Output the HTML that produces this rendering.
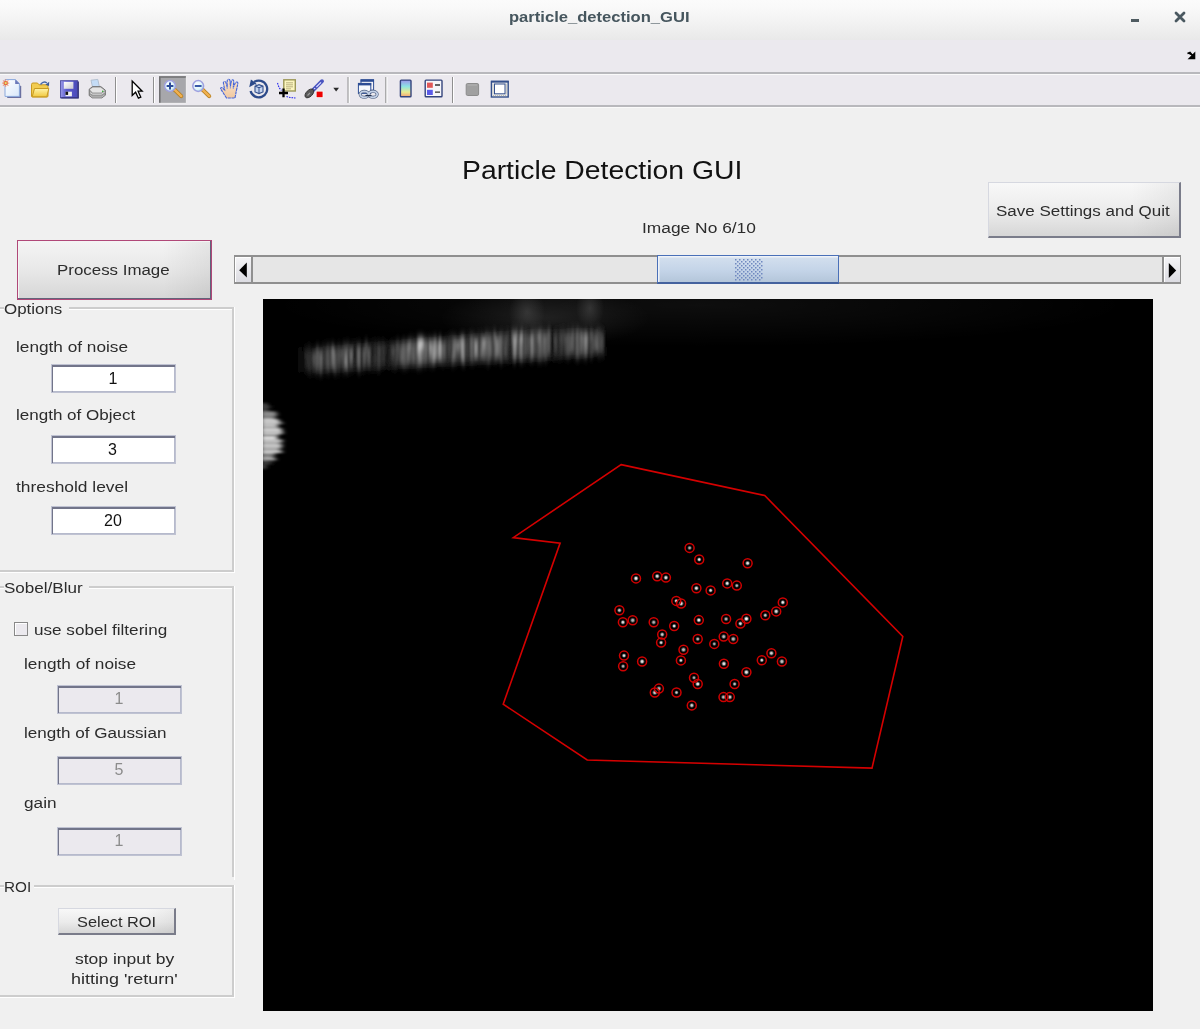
<!DOCTYPE html>
<html><head><meta charset="utf-8">
<style>
html,body{margin:0;padding:0}
body{width:1200px;height:1029px;position:relative;overflow:hidden;background:#f0f0f0;font-family:"Liberation Sans",sans-serif;color:#222}
.a{position:absolute}
.t{position:absolute;white-space:pre;line-height:1;transform-origin:0 0;filter:grayscale(1)}
.sep{position:absolute;width:1px;background:#8c8c8c;border-right:1px solid #fff}
.edit{position:absolute;background:#fff;box-sizing:border-box;border:1px solid #bfc2d2;box-shadow:inset 1px 2px 0 #72758a,inset -1px -1px 0 #b6bacc}
.edit.dis{background:#ebe9ee}
.pline{position:absolute;background:#c8c8c8}
.btn{position:absolute;box-sizing:border-box;background:linear-gradient(to right,rgba(0,0,0,0) 75%,rgba(0,0,0,0.05)),linear-gradient(#f8f8f8 0%,#ebebeb 55%,#d6d6d6 100%);border-top:1px solid #d6d8e0;border-left:1px solid #d6d8e0;border-right:2px solid #7a7c8a;border-bottom:2px solid #7a7c8a}
</style></head>
<body>
<!-- title bar -->
<div class="a" style="left:0;top:0;width:1200px;height:40px;background:linear-gradient(#fbfbfb,#f9f9f9 20%,#f1f1f1 62%,#e9e9e9)"></div>
<div class="t" style="left:509px;top:9px;font-size:15px;font-weight:bold;color:#46565e;transform:scaleX(1.105);filter:none">particle_detection_GUI</div>
<div class="a" style="left:1131px;top:19px;width:8px;height:3px;background:#4f5b61"></div>
<svg class="a" style="left:1174px;top:11px" width="12" height="12" viewBox="0 0 12 12"><path d="M2 2L10 10M10 2L2 10" stroke="#4a5860" stroke-width="2.8" stroke-linecap="round"/></svg>
<!-- menubar -->
<div class="a" style="left:0;top:40px;width:1200px;height:32px;background:#ebe9ee"></div>
<svg class="a" style="left:1186px;top:51px" width="10" height="9" viewBox="0 0 10 9"><path d="M1.5 2.5L4 1.5L7 5M8.5 2.5L8.5 7.5L3.5 7.5Z" stroke="#000" stroke-width="1.6" fill="#000"/></svg>
<div class="a" style="left:0;top:72px;width:1200px;height:2px;background:#b8b8bc"></div>
<div class="a" style="left:0;top:74px;width:1200px;height:1px;background:#fafafa"></div>
<!-- toolbar -->
<div class="a" style="left:0;top:75px;width:1200px;height:30px;background:#ebe9ee"></div>
<div class="a" style="left:0;top:105px;width:1200px;height:2px;background:#b8b8bc"></div>
<div class="a" style="left:0;top:107px;width:1200px;height:1px;background:#fafafa"></div>
<svg class="a" style="left:0;top:0" width="520" height="110" viewBox="0 0 520 110">
<defs>
<linearGradient id="pg" x1="0" y1="0" x2="1" y2="1"><stop offset="0" stop-color="#ffffff"/><stop offset="1" stop-color="#d8e8fa"/></linearGradient>
<linearGradient id="fy" x1="0" y1="0" x2="0" y2="1"><stop offset="0" stop-color="#fff4a8"/><stop offset="1" stop-color="#f0c840"/></linearGradient>
<linearGradient id="fl" x1="0" y1="0" x2="1" y2="0"><stop offset="0" stop-color="#9a9ae8"/><stop offset="0.35" stop-color="#5c5cd0"/><stop offset="1" stop-color="#4a4ab8"/></linearGradient>
<linearGradient id="lb" x1="0" y1="0" x2="1" y2="1"><stop offset="0" stop-color="#ffffff"/><stop offset="1" stop-color="#c8c8d0"/></linearGradient>
<radialGradient id="lens" cx="0.4" cy="0.4" r="0.6"><stop offset="0" stop-color="#ffffff"/><stop offset="0.7" stop-color="#e0f6fa"/><stop offset="1" stop-color="#b0e0ee"/></radialGradient>
<linearGradient id="cb" x1="0" y1="0" x2="0" y2="1"><stop offset="0" stop-color="#9c94ec"/><stop offset="0.38" stop-color="#8ce4e4"/><stop offset="0.72" stop-color="#e8ec90"/><stop offset="1" stop-color="#f4a474"/></linearGradient>
<linearGradient id="skin" x1="0" y1="0" x2="0" y2="1"><stop offset="0" stop-color="#fbe4cc"/><stop offset="1" stop-color="#f0c8a0"/></linearGradient>
</defs>
<!-- new -->
<path d="M6 81.5H16.5L20 85V96.5H6Z" fill="#6a70a0" transform="translate(1.2,1.6)"/>
<path d="M5 79.6H15.5L19.4 83.5V96.4H5Z" fill="url(#pg)" stroke="#8aa8dc" stroke-width="1"/>
<path d="M15.2 79.6L19.6 84H15.2Z" fill="#6a78b8"/>
<g stroke="#f09070" stroke-width="1.1" opacity="0.8"><path d="M3 80.4L8.4 85.8M8.4 80.4L3 85.8M5.7 79.3V86.9M2.1 83.1H9.3"/></g>
<circle cx="5.7" cy="83.1" r="2.2" fill="#e86a3a"/><circle cx="5.7" cy="83.1" r="1.1" fill="#e0e870"/>
<!-- open -->
<path d="M31.5 84.5Q31.5 83 33 83H37.5L39 84.8H46.5Q48 84.8 48 86.3V96Q48 97 47 97H32.5Q31.5 97 31.5 96Z" fill="#f2cc50" stroke="#c89a20" stroke-width="1"/>
<path d="M34.5 88.5H48.8L46.8 96.8H32.2Z" fill="url(#fy)" stroke="#c89a20" stroke-width="1"/>
<path d="M40.5 84.5Q43.5 80.5 47 83" fill="none" stroke="#4a6aa8" stroke-width="1.3"/>
<path d="M45.5 84.8L49.2 81.8L49 86Z" fill="#3a5a98"/>
<!-- save -->
<rect x="60.5" y="80.7" width="17.2" height="17.2" fill="url(#fl)" stroke="#40409a" stroke-width="0.8"/>
<path d="M61.2 97.9H78.2V81.5" fill="none" stroke="#30307a" stroke-width="1.4"/>
<rect x="63.8" y="81.8" width="9.6" height="7" fill="url(#lb)"/>
<rect x="65.5" y="91.7" width="6.4" height="4.6" fill="#f0f0f0"/>
<rect x="65.5" y="91.7" width="2.6" height="3.2" fill="#111"/>
<!-- print -->
<path d="M91 80.2L97.8 79.4L99.6 87.5H92.6Z" fill="#c4dcf6" stroke="#a8b8c8" stroke-width="0.8"/>
<path d="M89.2 89.2L92.6 86.6H100.8L105.4 90.2V95.2L101.8 97.9H92.4L89.2 95.6Z" fill="#9a9a9a" stroke="#6e6e6e" stroke-width="0.9"/>
<path d="M89.8 89.4L92.8 87.4H100.6L104.6 90.4L101.4 92.4H92.6Z" fill="#e4e4e4"/>
<path d="M90 92.6L92.6 94.2H101.4L104.8 92" fill="none" stroke="#d8d8d8" stroke-width="1"/>
<path d="M90.2 95.4L92.6 97H101.6L104.6 95" fill="none" stroke="#c8c8c8" stroke-width="0.8"/>
<rect x="102" y="90.6" width="1.4" height="1.4" fill="#40b040"/>
<!-- separators -->
<g fill="#8f8f8f"><rect x="115" y="77" width="1" height="26"/><rect x="153" y="77" width="1" height="26"/><rect x="347.5" y="77" width="1.2" height="26"/><rect x="385.3" y="77" width="1.2" height="26"/><rect x="452" y="77" width="1" height="26"/></g>
<g fill="#ffffff"><rect x="116" y="77" width="1" height="26"/><rect x="154" y="77" width="1" height="26"/><rect x="348.7" y="77" width="1" height="26"/><rect x="386.5" y="77" width="1" height="26"/><rect x="453" y="77" width="1" height="26"/></g>
<!-- arrow -->
<path d="M132.2 81V95.5L135.6 92.2L138.4 98.2L140.8 97.2L138.1 91.2H142.2Z" fill="#fff" stroke="#000" stroke-width="1.3" stroke-linejoin="miter"/>
<!-- zoom-in pressed -->
<rect x="159" y="76.2" width="27" height="26.8" fill="#a7a7ab"/>
<path d="M159.8 103V77H186" fill="none" stroke="#707072" stroke-width="1.6"/>
<path d="M186.3 76.5V103.3H159" fill="none" stroke="#f0f0f0" stroke-width="0.8"/>
<path d="M174.8 89.8L181.2 96.2" stroke="#b07818" stroke-width="4" stroke-linecap="round"/>
<path d="M174.8 89.8L181.2 96.2" stroke="#f0b050" stroke-width="2.6" stroke-linecap="round"/>
<circle cx="170" cy="86" r="5.4" fill="url(#lens)" stroke="#a0a0e0" stroke-width="1.5"/>
<path d="M166.6 86H173.4M170 82.6V89.4" stroke="#2a4a98" stroke-width="2"/>
<!-- zoom-out -->
<path d="M202.8 89.8L209.2 96.2" stroke="#b07818" stroke-width="4" stroke-linecap="round"/>
<path d="M202.8 89.8L209.2 96.2" stroke="#f0b050" stroke-width="2.6" stroke-linecap="round"/>
<circle cx="198.2" cy="86" r="5.4" fill="url(#lens)" stroke="#a0a0e0" stroke-width="1.5"/>
<path d="M194.8 86H201.6" stroke="#3a5aa8" stroke-width="2"/>
<!-- hand -->
<path d="M226.5 98L223 92.5L220.8 89.2Q220 87.6 221.8 87.6L224.6 89.8L223.4 83Q223.2 81.5 224.6 81.5Q225.7 81.6 226.1 83L227.2 87L227.2 80.8Q227.4 79.4 228.7 79.4Q229.9 79.4 230 80.8L230.4 86.5L231.4 80.8Q231.7 79.7 232.9 79.9Q233.8 80.1 233.7 81.3L233.3 87.3L235.5 82.6Q236.2 81.7 237.2 82.1Q238.1 82.6 237.8 83.8L236.3 91L235 98Z" fill="url(#skin)" stroke="#4666d8" stroke-width="1.15" stroke-dasharray="3 0.6"/>
<path d="M227.2 87V89M230.4 86.5V88.5M233.3 87.3V89" stroke="#6a88e0" stroke-width="0.8"/>
<!-- rotate -->
<path d="M250.6 91A8.4 8.4 0 1 0 254.2 81.9" fill="none" stroke="#2c4a8a" stroke-width="2.3"/>
<path d="M249.2 87.2L250.9 79.6L256.4 83.4Z" fill="#2c4a8a"/>
<path d="M255 86.2L259 84.7L263 86.2V92L259 93.6L255 92Z" fill="#c4d4f0" stroke="#34508e" stroke-width="1.1"/>
<path d="M255 86.2L259 87.7L263 86.2M259 87.7V93.6" fill="none" stroke="#34508e" stroke-width="1"/>
<path d="M255.5 83.3L256.6 86.2" stroke="#34508e" stroke-width="0.9"/>
<!-- data cursor -->
<rect x="283.8" y="79.8" width="11.5" height="11.2" fill="#fcf6c0" stroke="#9c9858" stroke-width="1.4"/>
<path d="M286 82.8H293M286 84.8H293M286 86.8H293M286 88.8H291" stroke="#a8a070" stroke-width="0.8"/>
<path d="M277.5 83L279 87.5L281.5 90.5M286.5 96.5L290 97.5L295.5 98" fill="none" stroke="#2a2aee" stroke-width="1.1" stroke-dasharray="1.6 1"/>
<path d="M279 93H288M283.5 88.6V97.2" stroke="#000" stroke-width="2.3"/>
<!-- brush -->
<path d="M322 81.2L313.6 89.6" stroke="#4a54c0" stroke-width="3.9" stroke-linecap="round"/>
<path d="M321 82.4L316.4 87" stroke="#dfe2ff" stroke-width="1.1"/>
<path d="M315.2 88L314 89.3" stroke="#ffffff" stroke-width="1"/>
<ellipse cx="309.4" cy="93.4" rx="5.4" ry="3.1" transform="rotate(-45 309.4 93.4)" fill="#5a5a5a" stroke="#2e2e2e" stroke-width="0.9"/>
<path d="M307.5 95.5L310 93" stroke="#a0a0a0" stroke-width="1.1"/>
<rect x="315.8" y="90.8" width="7.6" height="7.2" fill="#f4fcfc"/>
<rect x="316.6" y="91.6" width="6" height="5.6" fill="#ee0000"/>
<!-- dropdown -->
<path d="M333.3 87.8H339L336.15 91.6Z" fill="#2a2a2a"/>
<!-- link -->
<rect x="361" y="79.8" width="12.6" height="10.4" fill="#f4f4f8" stroke="#2c4c94" stroke-width="1"/>
<rect x="360.6" y="79.4" width="13.4" height="2.4" fill="#2c4c94"/>
<rect x="358.4" y="83.4" width="12.4" height="10" fill="#f6f8fc" stroke="#2c4c94" stroke-width="1"/>
<rect x="358" y="83" width="13.2" height="2.4" fill="#2c4c94"/>
<ellipse cx="364.3" cy="94.3" rx="4.2" ry="3" fill="none" stroke="#506080" stroke-width="3"/>
<ellipse cx="373" cy="94.3" rx="4.2" ry="3" fill="none" stroke="#506080" stroke-width="3"/>
<ellipse cx="364.3" cy="94.3" rx="4.2" ry="3" fill="none" stroke="#c4d2e8" stroke-width="1.8"/>
<ellipse cx="373" cy="94.3" rx="4.2" ry="3" fill="none" stroke="#c4d2e8" stroke-width="1.8"/>
<path d="M365.5 95.6H371.5" stroke="#1e2a48" stroke-width="1.3"/>
<!-- colorbar -->
<rect x="400.4" y="80.1" width="10.6" height="16.6" fill="url(#cb)" stroke="#34447c" stroke-width="1.4" rx="0.8"/>
<!-- legend -->
<rect x="425.2" y="80.1" width="16.8" height="16.6" fill="#f6f6fa" stroke="#34447c" stroke-width="1.4" rx="0.8"/>
<rect x="427" y="82.6" width="5.8" height="5.2" fill="#e05858"/>
<rect x="427" y="89.8" width="5.8" height="5.2" fill="#5a5ae8"/>
<path d="M435 85H440M435 92.2H440" stroke="#333" stroke-width="1.3"/>
<!-- grey square -->
<rect x="466.2" y="83.5" width="12.4" height="12" fill="#a0a0a0" stroke="#8c8c8c" stroke-width="1" rx="1.4"/><path d="M467.5 85H477" stroke="#b4b4b4" stroke-width="1"/>
<!-- plot tools -->
<rect x="491.4" y="81.4" width="16.8" height="15.6" fill="#e8e8e8" stroke="#34508c" stroke-width="1.4"/>
<rect x="491" y="80.8" width="17.6" height="1.8" fill="#34508c"/>
<rect x="494.5" y="84" width="10.5" height="9.8" fill="#ffffff" stroke="#34508c" stroke-width="1"/>
<path d="M493 84.5V94M506.5 84.5V94M493 95.6H506.5" stroke="#b8b8a8" stroke-width="1" stroke-dasharray="1 1"/>
</svg>


<!-- heading -->

<!-- save button -->
<div class="btn" style="left:988px;top:182px;width:193px;height:56px"></div>

<!-- process button -->
<div class="a" style="left:17px;top:240px;width:195px;height:60px;box-sizing:border-box;border:1px solid #b04878;box-shadow:inset -1px -1px 0 #62647a,inset 1px 1px 0 #f4f4f4;background:linear-gradient(to right,rgba(0,0,0,0) 75%,rgba(0,0,0,0.06)),linear-gradient(#f4f4f4,#e8e8e8 50%,#d6d6d6)"></div>

<!-- scrollbar -->
<div class="a" style="left:234px;top:255px;width:947px;height:29px;background:#e6e6e6;box-sizing:border-box;border-top:2px solid #8f8f8f;border-bottom:2px solid #8f8f8f"></div>
<div class="a" style="left:234px;top:255px;width:19px;height:29px;box-sizing:border-box;border:1px solid #909090;border-top-width:2px;border-bottom-width:2px;border-right-width:2px;background:linear-gradient(#f4f4f6,#dcdce2);box-shadow:inset 1px 1px 0 #fff"></div>
<svg class="a" style="left:234px;top:255px" width="19" height="29"><path d="M5.2 15.2L12.8 7.5L12.8 22.5Z" fill="#000"/></svg>
<div class="a" style="left:1162px;top:255px;width:19px;height:29px;box-sizing:border-box;border:1px solid #909090;border-top-width:2px;border-bottom-width:2px;border-left-width:2px;background:linear-gradient(#f4f4f6,#dcdce2);box-shadow:inset 1px 1px 0 #fff"></div>
<svg class="a" style="left:1162px;top:255px" width="19" height="29"><path d="M14.2 15.5L6.8 8L6.8 23Z" fill="#000"/></svg>
<div class="a" style="left:657px;top:255px;width:182px;height:29px;box-sizing:border-box;border:1.5px solid #4a70b8;border-bottom:2px solid #44629e;box-shadow:inset 1.5px 1.5px 0 #eef2f8;background:linear-gradient(#d4e0ee,#c4d4e8 55%,#b4c6da)"></div>
<svg class="a" style="left:735px;top:259px" width="28" height="22"><defs><pattern id="gp" width="4" height="4" patternUnits="userSpaceOnUse"><rect x="0" y="0" width="1.5" height="1.5" fill="#6f88c0"/><rect x="2" y="2" width="1.5" height="1.5" fill="#6f88c0"/></pattern></defs><rect width="28" height="22" fill="url(#gp)"/></svg>


<!-- options panel -->
<div class="a" style="left:0;top:307px;width:4px;height:2px;background:#cdcdcd"></div>
<div class="a" style="left:0;top:309px;width:4px;height:1px;background:#fff"></div>
<div class="a" style="left:69px;top:307px;width:165px;height:2px;background:#cdcdcd"></div>
<div class="a" style="left:69px;top:309px;width:163px;height:1px;background:#fff"></div>
<div class="a" style="left:232px;top:309px;width:2px;height:261px;background:#cdcdcd"></div>
<div class="a" style="left:234px;top:307px;width:1px;height:266px;background:#fff"></div>
<div class="a" style="left:0;top:570px;width:234px;height:2px;background:#cdcdcd"></div>
<div class="a" style="left:0;top:572px;width:235px;height:1px;background:#fff"></div>
<div class="a" style="left:0;top:586px;width:4px;height:2px;background:#cdcdcd"></div>
<div class="a" style="left:0;top:588px;width:4px;height:1px;background:#fff"></div>
<div class="a" style="left:89px;top:586px;width:145px;height:2px;background:#cdcdcd"></div>
<div class="a" style="left:89px;top:588px;width:143px;height:1px;background:#fff"></div>
<div class="a" style="left:232px;top:588px;width:2px;height:289px;background:#cdcdcd"></div>
<div class="a" style="left:234px;top:586px;width:1px;height:294px;background:#fff"></div>
<div class="a" style="left:0;top:885px;width:4px;height:2px;background:#cdcdcd"></div>
<div class="a" style="left:0;top:887px;width:4px;height:1px;background:#fff"></div>
<div class="a" style="left:34px;top:885px;width:200px;height:2px;background:#cdcdcd"></div>
<div class="a" style="left:34px;top:887px;width:198px;height:1px;background:#fff"></div>
<div class="a" style="left:232px;top:887px;width:2px;height:108px;background:#cdcdcd"></div>
<div class="a" style="left:234px;top:885px;width:1px;height:113px;background:#fff"></div>
<div class="a" style="left:0;top:995px;width:234px;height:2px;background:#cdcdcd"></div>
<div class="a" style="left:0;top:997px;width:235px;height:1px;background:#fff"></div>
<div class="edit" style="left:51px;top:364px;width:125px;height:29px"></div>
<div class="edit" style="left:51px;top:435px;width:125px;height:29px"></div>
<div class="edit" style="left:51px;top:506px;width:125px;height:29px"></div>
<div class="edit dis" style="left:57px;top:685px;width:125px;height:29px"></div>
<div class="edit dis" style="left:57px;top:756px;width:125px;height:29px"></div>
<div class="edit dis" style="left:57px;top:827px;width:125px;height:29px"></div>
<div class="a" style="left:14px;top:622px;width:14px;height:14px;box-sizing:border-box;border:1px solid #888;box-shadow:inset 1px 1px 0 #fff;background:#ebe9ee"></div>
<div class="btn" style="left:58px;top:908px;width:118px;height:27px"></div>

<!-- image -->
<svg class="a" style="left:263px;top:299px" width="890" height="712" viewBox="263 299 890 712">
<defs><filter id="bl1" filterUnits="userSpaceOnUse" x="263" y="299" width="890" height="712"><feGaussianBlur stdDeviation="1.1 4.2"/></filter><filter id="bl2" filterUnits="userSpaceOnUse" x="263" y="299" width="890" height="712"><feGaussianBlur stdDeviation="5"/></filter><filter id="bl3" filterUnits="userSpaceOnUse" x="263" y="299" width="890" height="712"><feGaussianBlur stdDeviation="2.5 0.9"/></filter><radialGradient id="dot"><stop offset="0" stop-color="#fff"/><stop offset="0.35" stop-color="#e8e8e8"/><stop offset="1" stop-color="#808080" stop-opacity="0"/></radialGradient></defs>
<rect x="263" y="299" width="890" height="712" fill="#000"/>
<defs><radialGradient id="hz"><stop offset="0" stop-color="#fff" stop-opacity="1"/><stop offset="1" stop-color="#fff" stop-opacity="0"/></radialGradient></defs>
<ellipse cx="700" cy="305" rx="430" ry="42" fill="url(#hz)" opacity="0.055"/>
<ellipse cx="545" cy="318" rx="105" ry="30" fill="url(#hz)" opacity="0.10"/>
<ellipse cx="527" cy="312" rx="18" ry="24" fill="url(#hz)" opacity="0.12"/>
<ellipse cx="590" cy="308" rx="14" ry="22" fill="url(#hz)" opacity="0.13"/>
<g filter="url(#bl2)"><polygon points="312,352 400,344 520,334 598,332 598,353 520,359 400,365 312,370" fill="#1c1c1c"/></g>
<g filter="url(#bl1)">
<rect x="298.0" y="347.3" width="1.5" height="9.0" fill="rgb(13,13,13)"/>
<rect x="298.0" y="356.3" width="1.5" height="17.6" fill="rgb(14,14,14)"/>
<rect x="299.5" y="347.3" width="1" height="10.4" fill="rgb(13,13,13)"/>
<rect x="299.5" y="357.7" width="1" height="11.7" fill="rgb(8,8,8)"/>
<rect x="300.5" y="347.2" width="1" height="8.1" fill="rgb(23,23,23)"/>
<rect x="300.5" y="355.2" width="1" height="17.1" fill="rgb(25,25,25)"/>
<rect x="301.5" y="347.4" width="1" height="14.5" fill="rgb(8,8,8)"/>
<rect x="301.5" y="362.0" width="1" height="8.7" fill="rgb(9,9,9)"/>
<rect x="302.5" y="350.9" width="2.5" height="11.6" fill="rgb(12,12,12)"/>
<rect x="302.5" y="362.5" width="2.5" height="9.6" fill="rgb(11,11,11)"/>
<rect x="305.0" y="348.6" width="1.5" height="8.0" fill="rgb(59,59,59)"/>
<rect x="305.0" y="356.6" width="1.5" height="13.5" fill="rgb(34,34,34)"/>
<rect x="306.5" y="350.7" width="1.5" height="13.5" fill="rgb(49,49,49)"/>
<rect x="306.5" y="364.2" width="1.5" height="6.0" fill="rgb(52,52,52)"/>
<rect x="308.0" y="346.4" width="1.5" height="15.7" fill="rgb(51,51,51)"/>
<rect x="308.0" y="362.1" width="1.5" height="10.2" fill="rgb(54,54,54)"/>
<rect x="309.5" y="349.0" width="1.5" height="7.9" fill="rgb(52,52,52)"/>
<rect x="309.5" y="356.9" width="1.5" height="16.2" fill="rgb(51,51,51)"/>
<rect x="311.0" y="350.1" width="2.5" height="15.3" fill="rgb(45,45,45)"/>
<rect x="311.0" y="365.4" width="2.5" height="6.6" fill="rgb(30,30,30)"/>
<rect x="313.5" y="351.4" width="2" height="10.2" fill="rgb(113,113,113)"/>
<rect x="313.5" y="361.6" width="2" height="8.6" fill="rgb(84,84,84)"/>
<rect x="315.5" y="347.9" width="1.5" height="8.4" fill="rgb(61,61,61)"/>
<rect x="315.5" y="356.3" width="1.5" height="16.9" fill="rgb(58,58,58)"/>
<rect x="317.0" y="347.1" width="1" height="10.3" fill="rgb(134,134,134)"/>
<rect x="317.0" y="357.4" width="1" height="12.9" fill="rgb(126,126,126)"/>
<rect x="318.0" y="349.3" width="1" height="11.7" fill="rgb(20,20,20)"/>
<rect x="318.0" y="361.0" width="1" height="6.8" fill="rgb(18,18,18)"/>
<rect x="319.0" y="348.6" width="1" height="14.3" fill="rgb(85,85,85)"/>
<rect x="319.0" y="362.9" width="1" height="10.5" fill="rgb(81,81,81)"/>
<rect x="320.0" y="350.4" width="2.5" height="13.1" fill="rgb(112,112,112)"/>
<rect x="320.0" y="363.5" width="2.5" height="9.8" fill="rgb(91,91,91)"/>
<rect x="322.5" y="345.3" width="2" height="8.7" fill="rgb(53,53,53)"/>
<rect x="322.5" y="354.0" width="2" height="13.9" fill="rgb(52,52,52)"/>
<rect x="324.5" y="348.0" width="1" height="13.7" fill="rgb(50,50,50)"/>
<rect x="324.5" y="361.7" width="1" height="11.4" fill="rgb(48,48,48)"/>
<rect x="325.5" y="346.8" width="2" height="7.9" fill="rgb(82,82,82)"/>
<rect x="325.5" y="354.7" width="2" height="14.8" fill="rgb(80,80,80)"/>
<rect x="327.5" y="345.4" width="2" height="15.7" fill="rgb(94,94,94)"/>
<rect x="327.5" y="361.1" width="2" height="10.6" fill="rgb(95,95,95)"/>
<rect x="329.5" y="347.5" width="2" height="10.5" fill="rgb(46,46,46)"/>
<rect x="329.5" y="358.1" width="2" height="9.8" fill="rgb(56,56,56)"/>
<rect x="331.5" y="345.8" width="2.5" height="8.6" fill="rgb(142,142,142)"/>
<rect x="331.5" y="354.3" width="2.5" height="14.8" fill="rgb(114,114,114)"/>
<rect x="334.0" y="348.9" width="2" height="15.3" fill="rgb(97,97,97)"/>
<rect x="334.0" y="364.1" width="2" height="8.5" fill="rgb(89,89,89)"/>
<rect x="336.0" y="346.8" width="2.5" height="16.9" fill="rgb(54,54,54)"/>
<rect x="336.0" y="363.7" width="2.5" height="7.4" fill="rgb(41,41,41)"/>
<rect x="338.5" y="346.3" width="1" height="17.9" fill="rgb(136,136,136)"/>
<rect x="338.5" y="364.3" width="1" height="7.9" fill="rgb(90,90,90)"/>
<rect x="339.5" y="345.6" width="1" height="16.5" fill="rgb(69,69,69)"/>
<rect x="339.5" y="362.1" width="1" height="7.3" fill="rgb(41,41,41)"/>
<rect x="340.5" y="348.5" width="2.5" height="8.5" fill="rgb(92,92,92)"/>
<rect x="340.5" y="356.9" width="2.5" height="10.1" fill="rgb(61,61,61)"/>
<rect x="343.0" y="343.8" width="1" height="16.6" fill="rgb(87,87,87)"/>
<rect x="343.0" y="360.3" width="1" height="11.6" fill="rgb(91,91,91)"/>
<rect x="344.0" y="343.9" width="1" height="15.3" fill="rgb(51,51,51)"/>
<rect x="344.0" y="359.2" width="1" height="7.8" fill="rgb(31,31,31)"/>
<rect x="345.0" y="345.2" width="2" height="8.5" fill="rgb(95,95,95)"/>
<rect x="345.0" y="353.7" width="2" height="15.7" fill="rgb(146,146,146)"/>
<rect x="347.0" y="343.8" width="2.5" height="10.6" fill="rgb(76,76,76)"/>
<rect x="347.0" y="354.4" width="2.5" height="17.5" fill="rgb(41,41,41)"/>
<rect x="349.5" y="346.2" width="1" height="9.9" fill="rgb(62,62,62)"/>
<rect x="349.5" y="356.1" width="1" height="11.3" fill="rgb(86,86,86)"/>
<rect x="350.5" y="347.5" width="1.5" height="13.5" fill="rgb(145,145,145)"/>
<rect x="350.5" y="361.0" width="1.5" height="7.9" fill="rgb(84,84,84)"/>
<rect x="352.0" y="345.1" width="1" height="6.5" fill="rgb(43,43,43)"/>
<rect x="352.0" y="351.7" width="1" height="15.1" fill="rgb(27,27,27)"/>
<rect x="353.0" y="342.8" width="2" height="13.8" fill="rgb(40,40,40)"/>
<rect x="353.0" y="356.6" width="2" height="13.1" fill="rgb(42,42,42)"/>
<rect x="355.0" y="342.5" width="2" height="11.3" fill="rgb(18,18,18)"/>
<rect x="355.0" y="353.8" width="2" height="12.2" fill="rgb(27,27,27)"/>
<rect x="357.0" y="345.1" width="1" height="13.5" fill="rgb(87,87,87)"/>
<rect x="357.0" y="358.6" width="1" height="9.9" fill="rgb(81,81,81)"/>
<rect x="358.0" y="345.1" width="2" height="17.1" fill="rgb(115,115,115)"/>
<rect x="358.0" y="362.2" width="2" height="8.4" fill="rgb(104,104,104)"/>
<rect x="360.0" y="342.6" width="1" height="8.3" fill="rgb(41,41,41)"/>
<rect x="360.0" y="350.9" width="1" height="16.9" fill="rgb(32,32,32)"/>
<rect x="361.0" y="346.4" width="2.5" height="13.6" fill="rgb(29,29,29)"/>
<rect x="361.0" y="360.0" width="2.5" height="10.8" fill="rgb(24,24,24)"/>
<rect x="363.5" y="347.3" width="1" height="9.9" fill="rgb(163,163,163)"/>
<rect x="363.5" y="357.2" width="1" height="10.1" fill="rgb(139,139,139)"/>
<rect x="364.5" y="343.9" width="1" height="10.4" fill="rgb(87,87,87)"/>
<rect x="364.5" y="354.3" width="1" height="13.1" fill="rgb(91,91,91)"/>
<rect x="365.5" y="341.5" width="1.5" height="13.9" fill="rgb(99,99,99)"/>
<rect x="365.5" y="355.4" width="1.5" height="11.4" fill="rgb(65,65,65)"/>
<rect x="367.0" y="342.8" width="1" height="13.5" fill="rgb(42,42,42)"/>
<rect x="367.0" y="356.4" width="1" height="8.6" fill="rgb(33,33,33)"/>
<rect x="368.0" y="346.8" width="2" height="10.4" fill="rgb(103,103,103)"/>
<rect x="368.0" y="357.3" width="2" height="9.8" fill="rgb(91,91,91)"/>
<rect x="370.0" y="345.1" width="1.5" height="7.2" fill="rgb(23,23,23)"/>
<rect x="370.0" y="352.4" width="1.5" height="14.7" fill="rgb(18,18,18)"/>
<rect x="371.5" y="341.3" width="1.5" height="13.7" fill="rgb(39,39,39)"/>
<rect x="371.5" y="354.9" width="1.5" height="14.7" fill="rgb(39,39,39)"/>
<rect x="373.0" y="345.0" width="1.5" height="17.2" fill="rgb(22,22,22)"/>
<rect x="373.0" y="362.2" width="1.5" height="7.8" fill="rgb(18,18,18)"/>
<rect x="374.5" y="341.9" width="1.5" height="14.3" fill="rgb(57,57,57)"/>
<rect x="374.5" y="356.1" width="1.5" height="10.8" fill="rgb(68,68,68)"/>
<rect x="376.0" y="343.5" width="1.5" height="13.4" fill="rgb(12,12,12)"/>
<rect x="376.0" y="356.9" width="1.5" height="13.1" fill="rgb(12,12,12)"/>
<rect x="377.5" y="343.3" width="2.5" height="11.8" fill="rgb(72,72,72)"/>
<rect x="377.5" y="355.1" width="2.5" height="14.0" fill="rgb(71,71,71)"/>
<rect x="380.0" y="344.4" width="1" height="10.8" fill="rgb(46,46,46)"/>
<rect x="380.0" y="355.2" width="1" height="12.6" fill="rgb(33,33,33)"/>
<rect x="381.0" y="345.4" width="1" height="6.8" fill="rgb(38,38,38)"/>
<rect x="381.0" y="352.2" width="1" height="14.3" fill="rgb(29,29,29)"/>
<rect x="382.0" y="341.5" width="2" height="11.7" fill="rgb(52,52,52)"/>
<rect x="382.0" y="353.1" width="2" height="12.4" fill="rgb(55,55,55)"/>
<rect x="384.0" y="345.7" width="1.5" height="6.2" fill="rgb(59,59,59)"/>
<rect x="384.0" y="352.0" width="1.5" height="13.6" fill="rgb(37,37,37)"/>
<rect x="385.5" y="342.6" width="1" height="9.2" fill="rgb(33,33,33)"/>
<rect x="385.5" y="351.7" width="1" height="14.9" fill="rgb(21,21,21)"/>
<rect x="386.5" y="343.1" width="1.5" height="9.6" fill="rgb(29,29,29)"/>
<rect x="386.5" y="352.7" width="1.5" height="13.2" fill="rgb(18,18,18)"/>
<rect x="388.0" y="344.9" width="2" height="12.5" fill="rgb(31,31,31)"/>
<rect x="388.0" y="357.4" width="2" height="10.7" fill="rgb(27,27,27)"/>
<rect x="390.0" y="343.2" width="2" height="12.9" fill="rgb(46,46,46)"/>
<rect x="390.0" y="356.1" width="2" height="7.5" fill="rgb(37,37,37)"/>
<rect x="392.0" y="344.6" width="2.5" height="12.2" fill="rgb(81,81,81)"/>
<rect x="392.0" y="356.8" width="2.5" height="10.9" fill="rgb(44,44,44)"/>
<rect x="394.5" y="343.1" width="2.5" height="9.5" fill="rgb(60,60,60)"/>
<rect x="394.5" y="352.5" width="2.5" height="14.7" fill="rgb(55,55,55)"/>
<rect x="397.0" y="341.5" width="1.5" height="6.7" fill="rgb(119,119,119)"/>
<rect x="397.0" y="348.1" width="1.5" height="15.0" fill="rgb(89,89,89)"/>
<rect x="398.5" y="343.1" width="1.5" height="11.7" fill="rgb(63,63,63)"/>
<rect x="398.5" y="354.8" width="1.5" height="11.0" fill="rgb(38,38,38)"/>
<rect x="400.0" y="343.6" width="2.5" height="12.4" fill="rgb(89,89,89)"/>
<rect x="400.0" y="355.9" width="2.5" height="8.2" fill="rgb(101,101,101)"/>
<rect x="402.5" y="341.2" width="2" height="15.4" fill="rgb(120,120,120)"/>
<rect x="402.5" y="356.6" width="2" height="10.0" fill="rgb(110,110,110)"/>
<rect x="404.5" y="342.1" width="1" height="13.4" fill="rgb(101,101,101)"/>
<rect x="404.5" y="355.5" width="1" height="11.0" fill="rgb(111,111,111)"/>
<rect x="405.5" y="342.3" width="2" height="10.0" fill="rgb(99,99,99)"/>
<rect x="405.5" y="352.3" width="2" height="14.0" fill="rgb(86,86,86)"/>
<rect x="407.5" y="341.3" width="2" height="7.6" fill="rgb(147,147,147)"/>
<rect x="407.5" y="348.9" width="2" height="15.1" fill="rgb(116,116,116)"/>
<rect x="409.5" y="340.6" width="1" height="8.8" fill="rgb(194,194,194)"/>
<rect x="409.5" y="349.5" width="1" height="14.2" fill="rgb(117,117,117)"/>
<rect x="410.5" y="339.4" width="2" height="13.3" fill="rgb(94,94,94)"/>
<rect x="410.5" y="352.8" width="2" height="11.3" fill="rgb(68,68,68)"/>
<rect x="412.5" y="343.1" width="1" height="6.7" fill="rgb(112,112,112)"/>
<rect x="412.5" y="349.8" width="1" height="14.9" fill="rgb(136,136,136)"/>
<rect x="413.5" y="340.2" width="2" height="8.3" fill="rgb(113,113,113)"/>
<rect x="413.5" y="348.5" width="2" height="15.5" fill="rgb(100,100,100)"/>
<rect x="415.5" y="343.1" width="1.5" height="15.0" fill="rgb(62,62,62)"/>
<rect x="415.5" y="358.1" width="1.5" height="7.7" fill="rgb(57,57,57)"/>
<rect x="417.0" y="337.9" width="2" height="17.5" fill="rgb(153,153,153)"/>
<rect x="417.0" y="355.4" width="2" height="11.6" fill="rgb(100,100,100)"/>
<rect x="419.0" y="343.0" width="1" height="8.1" fill="rgb(183,183,183)"/>
<rect x="419.0" y="351.0" width="1" height="11.8" fill="rgb(133,133,133)"/>
<rect x="420.0" y="337.5" width="1.5" height="13.0" fill="rgb(211,211,211)"/>
<rect x="420.0" y="350.5" width="1.5" height="15.3" fill="rgb(163,163,163)"/>
<rect x="421.5" y="341.6" width="1" height="13.3" fill="rgb(72,72,72)"/>
<rect x="421.5" y="355.0" width="1" height="8.9" fill="rgb(52,52,52)"/>
<rect x="422.5" y="338.2" width="1" height="10.5" fill="rgb(164,164,164)"/>
<rect x="422.5" y="348.6" width="1" height="14.9" fill="rgb(192,192,192)"/>
<rect x="423.5" y="338.9" width="2.5" height="11.6" fill="rgb(94,94,94)"/>
<rect x="423.5" y="350.5" width="2.5" height="13.8" fill="rgb(82,82,82)"/>
<rect x="426.0" y="340.2" width="1" height="10.1" fill="rgb(158,158,158)"/>
<rect x="426.0" y="350.3" width="1" height="13.2" fill="rgb(119,119,119)"/>
<rect x="427.0" y="338.9" width="2" height="8.8" fill="rgb(36,36,36)"/>
<rect x="427.0" y="347.8" width="2" height="13.5" fill="rgb(39,39,39)"/>
<rect x="429.0" y="339.2" width="1" height="11.0" fill="rgb(149,149,149)"/>
<rect x="429.0" y="350.3" width="1" height="13.4" fill="rgb(108,108,108)"/>
<rect x="430.0" y="340.8" width="1.5" height="14.1" fill="rgb(170,170,170)"/>
<rect x="430.0" y="354.9" width="1.5" height="8.8" fill="rgb(97,97,97)"/>
<rect x="431.5" y="339.2" width="1" height="14.4" fill="rgb(153,153,153)"/>
<rect x="431.5" y="353.6" width="1" height="8.6" fill="rgb(85,85,85)"/>
<rect x="432.5" y="339.4" width="2" height="7.3" fill="rgb(146,146,146)"/>
<rect x="432.5" y="346.7" width="2" height="17.1" fill="rgb(174,174,174)"/>
<rect x="434.5" y="337.9" width="2" height="8.3" fill="rgb(170,170,170)"/>
<rect x="434.5" y="346.2" width="2" height="14.6" fill="rgb(167,167,167)"/>
<rect x="436.5" y="341.7" width="2.5" height="11.5" fill="rgb(111,111,111)"/>
<rect x="436.5" y="353.2" width="2.5" height="7.3" fill="rgb(105,105,105)"/>
<rect x="439.0" y="338.0" width="2" height="9.1" fill="rgb(182,182,182)"/>
<rect x="439.0" y="347.0" width="2" height="13.5" fill="rgb(170,170,170)"/>
<rect x="441.0" y="341.7" width="1" height="7.7" fill="rgb(101,101,101)"/>
<rect x="441.0" y="349.4" width="1" height="11.4" fill="rgb(55,55,55)"/>
<rect x="442.0" y="341.7" width="2" height="14.2" fill="rgb(106,106,106)"/>
<rect x="442.0" y="355.9" width="2" height="7.5" fill="rgb(81,81,81)"/>
<rect x="444.0" y="339.8" width="1" height="7.6" fill="rgb(96,96,96)"/>
<rect x="444.0" y="347.3" width="1" height="12.5" fill="rgb(77,77,77)"/>
<rect x="445.0" y="341.4" width="1" height="6.1" fill="rgb(93,93,93)"/>
<rect x="445.0" y="347.4" width="1" height="13.3" fill="rgb(87,87,87)"/>
<rect x="446.0" y="337.5" width="2.5" height="8.8" fill="rgb(46,46,46)"/>
<rect x="446.0" y="346.3" width="2.5" height="18.1" fill="rgb(33,33,33)"/>
<rect x="448.5" y="340.2" width="1" height="14.1" fill="rgb(98,98,98)"/>
<rect x="448.5" y="354.3" width="1" height="6.6" fill="rgb(72,72,72)"/>
<rect x="449.5" y="335.9" width="1" height="17.9" fill="rgb(94,94,94)"/>
<rect x="449.5" y="353.7" width="1" height="8.9" fill="rgb(79,79,79)"/>
<rect x="450.5" y="335.8" width="2" height="16.8" fill="rgb(42,42,42)"/>
<rect x="450.5" y="352.6" width="2" height="8.7" fill="rgb(36,36,36)"/>
<rect x="452.5" y="336.4" width="1" height="16.8" fill="rgb(124,124,124)"/>
<rect x="452.5" y="353.2" width="1" height="11.3" fill="rgb(161,161,161)"/>
<rect x="453.5" y="337.8" width="2" height="7.2" fill="rgb(120,120,120)"/>
<rect x="453.5" y="345.0" width="2" height="14.5" fill="rgb(132,132,132)"/>
<rect x="455.5" y="337.3" width="1" height="11.1" fill="rgb(148,148,148)"/>
<rect x="455.5" y="348.3" width="1" height="15.1" fill="rgb(86,86,86)"/>
<rect x="456.5" y="340.4" width="2.5" height="8.7" fill="rgb(143,143,143)"/>
<rect x="456.5" y="349.1" width="2.5" height="10.8" fill="rgb(76,76,76)"/>
<rect x="459.0" y="337.1" width="2" height="11.5" fill="rgb(112,112,112)"/>
<rect x="459.0" y="348.6" width="2" height="12.2" fill="rgb(64,64,64)"/>
<rect x="461.0" y="336.5" width="1" height="16.2" fill="rgb(151,151,151)"/>
<rect x="461.0" y="352.7" width="1" height="7.5" fill="rgb(110,110,110)"/>
<rect x="462.0" y="336.2" width="2.5" height="14.3" fill="rgb(159,159,159)"/>
<rect x="462.0" y="350.5" width="2.5" height="12.3" fill="rgb(154,154,154)"/>
<rect x="464.5" y="337.0" width="1" height="18.5" fill="rgb(70,70,70)"/>
<rect x="464.5" y="355.5" width="1" height="8.6" fill="rgb(57,57,57)"/>
<rect x="465.5" y="337.0" width="2" height="14.4" fill="rgb(52,52,52)"/>
<rect x="465.5" y="351.4" width="2" height="7.0" fill="rgb(58,58,58)"/>
<rect x="467.5" y="335.8" width="1" height="15.1" fill="rgb(99,99,99)"/>
<rect x="467.5" y="350.9" width="1" height="9.5" fill="rgb(94,94,94)"/>
<rect x="468.5" y="334.0" width="1" height="11.8" fill="rgb(47,47,47)"/>
<rect x="468.5" y="345.8" width="1" height="15.7" fill="rgb(41,41,41)"/>
<rect x="469.5" y="334.3" width="1" height="15.7" fill="rgb(37,37,37)"/>
<rect x="469.5" y="350.0" width="1" height="11.2" fill="rgb(29,29,29)"/>
<rect x="470.5" y="335.0" width="2" height="16.1" fill="rgb(129,129,129)"/>
<rect x="470.5" y="351.1" width="2" height="10.3" fill="rgb(118,118,118)"/>
<rect x="472.5" y="335.6" width="1.5" height="10.2" fill="rgb(85,85,85)"/>
<rect x="472.5" y="345.8" width="1.5" height="16.6" fill="rgb(74,74,74)"/>
<rect x="474.0" y="334.4" width="1" height="9.6" fill="rgb(84,84,84)"/>
<rect x="474.0" y="344.0" width="1" height="14.4" fill="rgb(88,88,88)"/>
<rect x="475.0" y="339.1" width="2.5" height="9.5" fill="rgb(168,168,168)"/>
<rect x="475.0" y="348.6" width="2.5" height="9.9" fill="rgb(155,155,155)"/>
<rect x="477.5" y="333.7" width="1.5" height="17.4" fill="rgb(77,77,77)"/>
<rect x="477.5" y="351.1" width="1.5" height="7.9" fill="rgb(83,83,83)"/>
<rect x="479.0" y="336.4" width="1.5" height="14.7" fill="rgb(34,34,34)"/>
<rect x="479.0" y="351.1" width="1.5" height="11.3" fill="rgb(45,45,45)"/>
<rect x="480.5" y="334.9" width="2.5" height="9.0" fill="rgb(109,109,109)"/>
<rect x="480.5" y="343.9" width="2.5" height="14.6" fill="rgb(119,119,119)"/>
<rect x="483.0" y="337.3" width="2.5" height="10.2" fill="rgb(161,161,161)"/>
<rect x="483.0" y="347.5" width="2.5" height="12.5" fill="rgb(101,101,101)"/>
<rect x="485.5" y="332.6" width="1" height="11.7" fill="rgb(144,144,144)"/>
<rect x="485.5" y="344.3" width="1" height="13.8" fill="rgb(136,136,136)"/>
<rect x="486.5" y="333.7" width="1" height="16.8" fill="rgb(122,122,122)"/>
<rect x="486.5" y="350.5" width="1" height="12.8" fill="rgb(84,84,84)"/>
<rect x="487.5" y="334.5" width="2.5" height="19.6" fill="rgb(110,110,110)"/>
<rect x="487.5" y="354.1" width="2.5" height="8.5" fill="rgb(87,87,87)"/>
<rect x="490.0" y="334.4" width="2.5" height="8.2" fill="rgb(82,82,82)"/>
<rect x="490.0" y="342.6" width="2.5" height="15.6" fill="rgb(98,98,98)"/>
<rect x="492.5" y="331.6" width="1.5" height="16.0" fill="rgb(53,53,53)"/>
<rect x="492.5" y="347.7" width="1.5" height="12.8" fill="rgb(29,29,29)"/>
<rect x="494.0" y="332.4" width="2" height="9.8" fill="rgb(123,123,123)"/>
<rect x="494.0" y="342.2" width="2" height="17.0" fill="rgb(99,99,99)"/>
<rect x="496.0" y="337.0" width="2" height="7.4" fill="rgb(136,136,136)"/>
<rect x="496.0" y="344.5" width="2" height="13.8" fill="rgb(127,127,127)"/>
<rect x="498.0" y="334.9" width="2" height="13.2" fill="rgb(104,104,104)"/>
<rect x="498.0" y="348.1" width="2" height="9.4" fill="rgb(104,104,104)"/>
<rect x="500.0" y="333.3" width="2.5" height="18.1" fill="rgb(104,104,104)"/>
<rect x="500.0" y="351.4" width="2.5" height="10.6" fill="rgb(93,93,93)"/>
<rect x="502.5" y="332.8" width="2" height="17.1" fill="rgb(54,54,54)"/>
<rect x="502.5" y="349.9" width="2" height="7.8" fill="rgb(34,34,34)"/>
<rect x="504.5" y="334.4" width="2" height="11.0" fill="rgb(90,90,90)"/>
<rect x="504.5" y="345.5" width="2" height="13.1" fill="rgb(99,99,99)"/>
<rect x="506.5" y="331.7" width="1.5" height="12.1" fill="rgb(67,67,67)"/>
<rect x="506.5" y="343.9" width="1.5" height="15.0" fill="rgb(49,49,49)"/>
<rect x="508.0" y="331.5" width="1" height="18.1" fill="rgb(63,63,63)"/>
<rect x="508.0" y="349.6" width="1" height="11.5" fill="rgb(47,47,47)"/>
<rect x="509.0" y="332.2" width="2" height="16.4" fill="rgb(26,26,26)"/>
<rect x="509.0" y="348.6" width="2" height="10.0" fill="rgb(25,25,25)"/>
<rect x="511.0" y="334.2" width="1" height="13.5" fill="rgb(28,28,28)"/>
<rect x="511.0" y="347.8" width="1" height="13.3" fill="rgb(33,33,33)"/>
<rect x="512.0" y="329.9" width="2" height="14.6" fill="rgb(117,117,117)"/>
<rect x="512.0" y="344.5" width="2" height="12.2" fill="rgb(73,73,73)"/>
<rect x="514.0" y="335.3" width="1" height="9.7" fill="rgb(170,170,170)"/>
<rect x="514.0" y="345.0" width="1" height="16.8" fill="rgb(165,165,165)"/>
<rect x="515.0" y="331.0" width="1" height="14.8" fill="rgb(176,176,176)"/>
<rect x="515.0" y="345.8" width="1" height="12.4" fill="rgb(126,126,126)"/>
<rect x="516.0" y="330.6" width="1.5" height="13.6" fill="rgb(108,108,108)"/>
<rect x="516.0" y="344.3" width="1.5" height="13.5" fill="rgb(77,77,77)"/>
<rect x="517.5" y="330.9" width="1" height="12.2" fill="rgb(127,127,127)"/>
<rect x="517.5" y="343.1" width="1" height="14.9" fill="rgb(85,85,85)"/>
<rect x="518.5" y="334.9" width="2" height="12.1" fill="rgb(85,85,85)"/>
<rect x="518.5" y="347.1" width="2" height="11.7" fill="rgb(85,85,85)"/>
<rect x="520.5" y="331.4" width="1.5" height="11.9" fill="rgb(206,206,206)"/>
<rect x="520.5" y="343.3" width="1.5" height="17.5" fill="rgb(153,153,153)"/>
<rect x="522.0" y="330.3" width="1.5" height="20.0" fill="rgb(36,36,36)"/>
<rect x="522.0" y="350.3" width="1.5" height="9.3" fill="rgb(37,37,37)"/>
<rect x="523.5" y="332.4" width="1.5" height="11.6" fill="rgb(96,96,96)"/>
<rect x="523.5" y="344.0" width="1.5" height="15.7" fill="rgb(85,85,85)"/>
<rect x="525.0" y="331.4" width="1" height="8.4" fill="rgb(98,98,98)"/>
<rect x="525.0" y="339.8" width="1" height="18.0" fill="rgb(94,94,94)"/>
<rect x="526.0" y="331.0" width="1" height="11.2" fill="rgb(25,25,25)"/>
<rect x="526.0" y="342.2" width="1" height="14.1" fill="rgb(27,27,27)"/>
<rect x="527.0" y="333.8" width="2" height="6.9" fill="rgb(97,97,97)"/>
<rect x="527.0" y="340.7" width="2" height="15.8" fill="rgb(84,84,84)"/>
<rect x="529.0" y="334.0" width="2" height="12.0" fill="rgb(70,70,70)"/>
<rect x="529.0" y="346.0" width="2" height="14.1" fill="rgb(51,51,51)"/>
<rect x="531.0" y="332.3" width="2.5" height="14.3" fill="rgb(147,147,147)"/>
<rect x="531.0" y="346.6" width="2.5" height="12.1" fill="rgb(130,130,130)"/>
<rect x="533.5" y="331.9" width="1" height="10.2" fill="rgb(47,47,47)"/>
<rect x="533.5" y="342.0" width="1" height="15.5" fill="rgb(64,64,64)"/>
<rect x="534.5" y="329.8" width="1" height="14.1" fill="rgb(136,136,136)"/>
<rect x="534.5" y="343.9" width="1" height="13.7" fill="rgb(123,123,123)"/>
<rect x="535.5" y="330.5" width="2" height="8.4" fill="rgb(69,69,69)"/>
<rect x="535.5" y="338.9" width="2" height="17.9" fill="rgb(60,60,60)"/>
<rect x="537.5" y="331.2" width="2.5" height="9.7" fill="rgb(129,129,129)"/>
<rect x="537.5" y="340.9" width="2.5" height="19.5" fill="rgb(86,86,86)"/>
<rect x="540.0" y="329.3" width="1" height="20.6" fill="rgb(116,116,116)"/>
<rect x="540.0" y="349.9" width="1" height="10.2" fill="rgb(72,72,72)"/>
<rect x="541.0" y="331.1" width="1" height="14.4" fill="rgb(83,83,83)"/>
<rect x="541.0" y="345.5" width="1" height="13.9" fill="rgb(91,91,91)"/>
<rect x="542.0" y="329.5" width="1" height="19.4" fill="rgb(66,66,66)"/>
<rect x="542.0" y="348.9" width="1" height="11.1" fill="rgb(56,56,56)"/>
<rect x="543.0" y="332.1" width="1.5" height="15.8" fill="rgb(107,107,107)"/>
<rect x="543.0" y="347.9" width="1.5" height="8.9" fill="rgb(100,100,100)"/>
<rect x="544.5" y="332.6" width="2" height="12.8" fill="rgb(120,120,120)"/>
<rect x="544.5" y="345.4" width="2" height="14.2" fill="rgb(100,100,100)"/>
<rect x="546.5" y="331.9" width="1.5" height="9.5" fill="rgb(85,85,85)"/>
<rect x="546.5" y="341.4" width="1.5" height="16.3" fill="rgb(78,78,78)"/>
<rect x="548.0" y="329.2" width="2" height="8.0" fill="rgb(109,109,109)"/>
<rect x="548.0" y="337.2" width="2" height="17.2" fill="rgb(95,95,95)"/>
<rect x="550.0" y="333.4" width="2.5" height="9.6" fill="rgb(21,21,21)"/>
<rect x="550.0" y="343.0" width="2.5" height="15.6" fill="rgb(15,15,15)"/>
<rect x="552.5" y="333.7" width="2.5" height="8.9" fill="rgb(38,38,38)"/>
<rect x="552.5" y="342.6" width="2.5" height="17.0" fill="rgb(31,31,31)"/>
<rect x="555.0" y="332.7" width="1" height="13.0" fill="rgb(101,101,101)"/>
<rect x="555.0" y="345.7" width="1" height="8.6" fill="rgb(83,83,83)"/>
<rect x="556.0" y="329.4" width="1" height="12.3" fill="rgb(36,36,36)"/>
<rect x="556.0" y="341.7" width="1" height="13.9" fill="rgb(37,37,37)"/>
<rect x="557.0" y="333.6" width="1.5" height="13.3" fill="rgb(46,46,46)"/>
<rect x="557.0" y="346.9" width="1.5" height="11.3" fill="rgb(37,37,37)"/>
<rect x="558.5" y="330.7" width="2.5" height="12.0" fill="rgb(52,52,52)"/>
<rect x="558.5" y="342.8" width="2.5" height="15.4" fill="rgb(43,43,43)"/>
<rect x="561.0" y="331.5" width="1" height="11.2" fill="rgb(91,91,91)"/>
<rect x="561.0" y="342.7" width="1" height="12.4" fill="rgb(70,70,70)"/>
<rect x="562.0" y="331.0" width="1" height="10.1" fill="rgb(48,48,48)"/>
<rect x="562.0" y="341.1" width="1" height="17.0" fill="rgb(39,39,39)"/>
<rect x="563.0" y="329.7" width="2" height="14.4" fill="rgb(65,65,65)"/>
<rect x="563.0" y="344.1" width="2" height="10.4" fill="rgb(44,44,44)"/>
<rect x="565.0" y="333.9" width="2.5" height="7.7" fill="rgb(90,90,90)"/>
<rect x="565.0" y="341.6" width="2.5" height="14.9" fill="rgb(68,68,68)"/>
<rect x="567.5" y="330.4" width="2" height="11.9" fill="rgb(100,100,100)"/>
<rect x="567.5" y="342.3" width="2" height="14.6" fill="rgb(95,95,95)"/>
<rect x="569.5" y="333.2" width="2" height="10.2" fill="rgb(89,89,89)"/>
<rect x="569.5" y="343.4" width="2" height="10.9" fill="rgb(90,90,90)"/>
<rect x="571.5" y="329.8" width="2" height="15.2" fill="rgb(109,109,109)"/>
<rect x="571.5" y="345.0" width="2" height="8.7" fill="rgb(103,103,103)"/>
<rect x="573.5" y="329.3" width="1" height="10.7" fill="rgb(96,96,96)"/>
<rect x="573.5" y="340.0" width="1" height="14.0" fill="rgb(89,89,89)"/>
<rect x="574.5" y="332.0" width="2" height="9.3" fill="rgb(58,58,58)"/>
<rect x="574.5" y="341.2" width="2" height="16.4" fill="rgb(54,54,54)"/>
<rect x="576.5" y="329.1" width="1.5" height="11.7" fill="rgb(129,129,129)"/>
<rect x="576.5" y="340.8" width="1.5" height="17.3" fill="rgb(120,120,120)"/>
<rect x="578.0" y="330.0" width="1" height="17.4" fill="rgb(60,60,60)"/>
<rect x="578.0" y="347.4" width="1" height="10.8" fill="rgb(46,46,46)"/>
<rect x="579.0" y="329.3" width="1" height="13.7" fill="rgb(51,51,51)"/>
<rect x="579.0" y="343.0" width="1" height="14.5" fill="rgb(75,75,75)"/>
<rect x="580.0" y="331.4" width="2" height="8.4" fill="rgb(123,123,123)"/>
<rect x="580.0" y="339.8" width="2" height="15.1" fill="rgb(98,98,98)"/>
<rect x="582.0" y="331.8" width="2.5" height="13.3" fill="rgb(98,98,98)"/>
<rect x="582.0" y="345.1" width="2.5" height="10.5" fill="rgb(82,82,82)"/>
<rect x="584.5" y="331.7" width="2.5" height="14.5" fill="rgb(147,147,147)"/>
<rect x="584.5" y="346.2" width="2.5" height="10.8" fill="rgb(119,119,119)"/>
<rect x="587.0" y="332.8" width="1.5" height="9.4" fill="rgb(93,93,93)"/>
<rect x="587.0" y="342.2" width="1.5" height="11.0" fill="rgb(60,60,60)"/>
<rect x="588.5" y="332.6" width="2" height="12.5" fill="rgb(48,48,48)"/>
<rect x="588.5" y="345.1" width="2" height="9.7" fill="rgb(44,44,44)"/>
<rect x="590.5" y="330.3" width="1.5" height="8.5" fill="rgb(124,124,124)"/>
<rect x="590.5" y="338.8" width="1.5" height="18.5" fill="rgb(86,86,86)"/>
<rect x="592.0" y="330.8" width="1" height="14.0" fill="rgb(40,40,40)"/>
<rect x="592.0" y="344.8" width="1" height="9.9" fill="rgb(38,38,38)"/>
<rect x="593.0" y="333.0" width="1.5" height="11.2" fill="rgb(92,92,92)"/>
<rect x="593.0" y="344.2" width="1.5" height="8.4" fill="rgb(101,101,101)"/>
<rect x="594.5" y="331.1" width="1" height="9.8" fill="rgb(86,86,86)"/>
<rect x="594.5" y="340.9" width="1" height="11.9" fill="rgb(75,75,75)"/>
<rect x="595.5" y="330.7" width="2" height="8.9" fill="rgb(97,97,97)"/>
<rect x="595.5" y="339.6" width="2" height="12.2" fill="rgb(116,116,116)"/>
<rect x="597.5" y="330.0" width="1" height="14.8" fill="rgb(98,98,98)"/>
<rect x="597.5" y="344.8" width="1" height="7.2" fill="rgb(134,134,134)"/>
<rect x="598.5" y="328.5" width="1" height="12.5" fill="rgb(95,95,95)"/>
<rect x="598.5" y="341.0" width="1" height="15.8" fill="rgb(94,94,94)"/>
<rect x="599.5" y="330.4" width="2" height="13.4" fill="rgb(76,76,76)"/>
<rect x="599.5" y="343.9" width="2" height="7.8" fill="rgb(89,89,89)"/>
<rect x="601.5" y="333.0" width="1.5" height="10.8" fill="rgb(89,89,89)"/>
<rect x="601.5" y="343.8" width="1.5" height="11.1" fill="rgb(81,81,81)"/>
<rect x="603.0" y="329.9" width="1.5" height="12.9" fill="rgb(44,44,44)"/>
<rect x="603.0" y="342.9" width="1.5" height="10.4" fill="rgb(33,33,33)"/>
<rect x="604.5" y="332.0" width="1.5" height="14.7" fill="rgb(14,14,14)"/>
<rect x="604.5" y="346.7" width="1.5" height="9.3" fill="rgb(19,19,19)"/>
<ellipse cx="421" cy="343" rx="3" ry="4" fill="#ddd"/>
</g>
<g filter="url(#bl3)">
<rect x="261" y="403.0" width="6.3" height="1.5" fill="rgb(79,79,79)"/>
<rect x="261" y="404.5" width="6.5" height="1.5" fill="rgb(79,79,79)"/>
<rect x="261" y="406.0" width="10.1" height="1.5" fill="rgb(76,76,76)"/>
<rect x="261" y="407.5" width="7.1" height="2" fill="rgb(82,82,82)"/>
<rect x="261" y="409.5" width="7.4" height="2" fill="rgb(65,65,65)"/>
<rect x="261" y="411.5" width="15.1" height="2" fill="rgb(155,155,155)"/>
<rect x="261" y="413.5" width="16.4" height="1.5" fill="rgb(159,159,159)"/>
<rect x="261" y="415.0" width="15.2" height="2.5" fill="rgb(129,129,129)"/>
<rect x="261" y="417.5" width="13.6" height="1.5" fill="rgb(163,163,163)"/>
<rect x="261" y="419.0" width="17.6" height="1.5" fill="rgb(215,215,215)"/>
<rect x="261" y="420.5" width="18.8" height="2" fill="rgb(239,239,239)"/>
<rect x="261" y="422.5" width="21.4" height="1.5" fill="rgb(208,208,208)"/>
<rect x="261" y="424.0" width="17.0" height="3" fill="rgb(187,187,187)"/>
<rect x="261" y="427.0" width="17.9" height="1.5" fill="rgb(180,180,180)"/>
<rect x="261" y="428.5" width="21.0" height="3" fill="rgb(225,225,225)"/>
<rect x="261" y="431.5" width="22.0" height="2.5" fill="rgb(203,203,203)"/>
<rect x="261" y="434.0" width="18.2" height="1.5" fill="rgb(181,181,181)"/>
<rect x="261" y="435.5" width="16.3" height="1.5" fill="rgb(167,167,167)"/>
<rect x="261" y="437.0" width="16.6" height="2.5" fill="rgb(237,237,237)"/>
<rect x="261" y="439.5" width="21.4" height="3" fill="rgb(209,209,209)"/>
<rect x="261" y="442.5" width="18.5" height="1.5" fill="rgb(184,184,184)"/>
<rect x="261" y="444.0" width="21.2" height="2" fill="rgb(195,195,195)"/>
<rect x="261" y="446.0" width="20.7" height="2.5" fill="rgb(196,196,196)"/>
<rect x="261" y="448.5" width="18.1" height="2" fill="rgb(191,191,191)"/>
<rect x="261" y="450.5" width="21.0" height="2.5" fill="rgb(215,215,215)"/>
<rect x="261" y="453.0" width="14.0" height="2.5" fill="rgb(139,139,139)"/>
<rect x="261" y="455.5" width="12.6" height="2.5" fill="rgb(148,148,148)"/>
<rect x="261" y="458.0" width="14.9" height="2.5" fill="rgb(178,178,178)"/>
<rect x="261" y="460.5" width="6.9" height="1.5" fill="rgb(68,68,68)"/>
<rect x="261" y="462.0" width="10.8" height="2.5" fill="rgb(62,62,62)"/>
<rect x="261" y="464.5" width="5.2" height="1.5" fill="rgb(83,83,83)"/>
<rect x="261" y="466.0" width="5.3" height="3" fill="rgb(75,75,75)"/>
</g>
<polygon points="621.1,464.6 764.7,495.5 902.8,636.5 872.0,768.1 587.2,760.0 503.2,704.2 560.1,543.1 513.3,537.6" fill="none" stroke="#d40000" stroke-width="1.6" stroke-linejoin="miter"/>
<circle cx="689.6" cy="547.9" r="2.51" fill="url(#dot)" opacity="0.70"/>
<circle cx="699.2" cy="559.5" r="2.43" fill="url(#dot)" opacity="0.98"/>
<circle cx="747.6" cy="563.2" r="2.73" fill="url(#dot)" opacity="0.90"/>
<circle cx="636.0" cy="578.4" r="2.85" fill="url(#dot)" opacity="0.97"/>
<circle cx="657.2" cy="576.2" r="2.73" fill="url(#dot)" opacity="0.89"/>
<circle cx="665.9" cy="577.6" r="2.74" fill="url(#dot)" opacity="0.91"/>
<circle cx="696.4" cy="588.2" r="2.72" fill="url(#dot)" opacity="0.90"/>
<circle cx="710.6" cy="590.4" r="2.45" fill="url(#dot)" opacity="0.90"/>
<circle cx="727.2" cy="583.4" r="2.62" fill="url(#dot)" opacity="0.93"/>
<circle cx="736.8" cy="585.6" r="2.37" fill="url(#dot)" opacity="0.75"/>
<circle cx="676.3" cy="600.9" r="2.33" fill="url(#dot)" opacity="0.93"/>
<circle cx="681.1" cy="603.5" r="2.94" fill="url(#dot)" opacity="0.90"/>
<circle cx="782.8" cy="602.4" r="2.56" fill="url(#dot)" opacity="0.95"/>
<circle cx="776.2" cy="611.4" r="2.85" fill="url(#dot)" opacity="0.87"/>
<circle cx="765.3" cy="615.3" r="2.48" fill="url(#dot)" opacity="0.79"/>
<circle cx="619.4" cy="610.3" r="2.60" fill="url(#dot)" opacity="0.80"/>
<circle cx="622.9" cy="622.3" r="2.60" fill="url(#dot)" opacity="0.89"/>
<circle cx="632.7" cy="620.3" r="2.95" fill="url(#dot)" opacity="0.72"/>
<circle cx="653.7" cy="622.3" r="2.70" fill="url(#dot)" opacity="0.71"/>
<circle cx="674.2" cy="626.0" r="2.38" fill="url(#dot)" opacity="0.94"/>
<circle cx="698.8" cy="620.1" r="2.70" fill="url(#dot)" opacity="0.98"/>
<circle cx="726.1" cy="619.0" r="2.61" fill="url(#dot)" opacity="0.70"/>
<circle cx="740.4" cy="623.6" r="2.57" fill="url(#dot)" opacity="0.88"/>
<circle cx="746.4" cy="618.8" r="2.96" fill="url(#dot)" opacity="0.99"/>
<circle cx="662.2" cy="634.5" r="2.63" fill="url(#dot)" opacity="0.82"/>
<circle cx="661.1" cy="642.6" r="2.37" fill="url(#dot)" opacity="0.89"/>
<circle cx="697.7" cy="639.0" r="2.45" fill="url(#dot)" opacity="0.75"/>
<circle cx="714.3" cy="643.9" r="2.31" fill="url(#dot)" opacity="0.70"/>
<circle cx="723.7" cy="636.6" r="2.78" fill="url(#dot)" opacity="0.74"/>
<circle cx="733.3" cy="639.0" r="2.98" fill="url(#dot)" opacity="0.73"/>
<circle cx="683.5" cy="649.7" r="2.91" fill="url(#dot)" opacity="0.74"/>
<circle cx="680.9" cy="660.4" r="2.31" fill="url(#dot)" opacity="0.92"/>
<circle cx="624.0" cy="655.6" r="2.47" fill="url(#dot)" opacity="0.92"/>
<circle cx="623.1" cy="666.3" r="2.43" fill="url(#dot)" opacity="0.72"/>
<circle cx="642.1" cy="661.5" r="2.84" fill="url(#dot)" opacity="0.91"/>
<circle cx="723.9" cy="663.7" r="2.90" fill="url(#dot)" opacity="0.92"/>
<circle cx="761.8" cy="660.2" r="2.36" fill="url(#dot)" opacity="0.89"/>
<circle cx="771.4" cy="653.2" r="2.80" fill="url(#dot)" opacity="0.84"/>
<circle cx="781.9" cy="661.5" r="2.95" fill="url(#dot)" opacity="0.78"/>
<circle cx="746.4" cy="672.2" r="2.98" fill="url(#dot)" opacity="0.92"/>
<circle cx="694.0" cy="677.7" r="2.31" fill="url(#dot)" opacity="0.70"/>
<circle cx="697.7" cy="684.0" r="2.76" fill="url(#dot)" opacity="0.95"/>
<circle cx="734.6" cy="684.0" r="2.36" fill="url(#dot)" opacity="0.79"/>
<circle cx="658.9" cy="688.6" r="2.81" fill="url(#dot)" opacity="0.75"/>
<circle cx="654.8" cy="692.5" r="2.90" fill="url(#dot)" opacity="0.85"/>
<circle cx="676.5" cy="692.5" r="2.34" fill="url(#dot)" opacity="0.81"/>
<circle cx="691.8" cy="705.4" r="2.70" fill="url(#dot)" opacity="0.83"/>
<circle cx="723.5" cy="697.1" r="2.77" fill="url(#dot)" opacity="0.74"/>
<circle cx="729.8" cy="697.1" r="2.86" fill="url(#dot)" opacity="0.81"/>
<circle cx="689.6" cy="547.9" r="4.5" fill="none" stroke="#d00000" stroke-width="1.5"/>
<circle cx="699.2" cy="559.5" r="4.5" fill="none" stroke="#d00000" stroke-width="1.5"/>
<circle cx="747.6" cy="563.2" r="4.5" fill="none" stroke="#d00000" stroke-width="1.5"/>
<circle cx="636.0" cy="578.4" r="4.5" fill="none" stroke="#d00000" stroke-width="1.5"/>
<circle cx="657.2" cy="576.2" r="4.5" fill="none" stroke="#d00000" stroke-width="1.5"/>
<circle cx="665.9" cy="577.6" r="4.5" fill="none" stroke="#d00000" stroke-width="1.5"/>
<circle cx="696.4" cy="588.2" r="4.5" fill="none" stroke="#d00000" stroke-width="1.5"/>
<circle cx="710.6" cy="590.4" r="4.5" fill="none" stroke="#d00000" stroke-width="1.5"/>
<circle cx="727.2" cy="583.4" r="4.5" fill="none" stroke="#d00000" stroke-width="1.5"/>
<circle cx="736.8" cy="585.6" r="4.5" fill="none" stroke="#d00000" stroke-width="1.5"/>
<circle cx="676.3" cy="600.9" r="4.5" fill="none" stroke="#d00000" stroke-width="1.5"/>
<circle cx="681.1" cy="603.5" r="4.5" fill="none" stroke="#d00000" stroke-width="1.5"/>
<circle cx="782.8" cy="602.4" r="4.5" fill="none" stroke="#d00000" stroke-width="1.5"/>
<circle cx="776.2" cy="611.4" r="4.5" fill="none" stroke="#d00000" stroke-width="1.5"/>
<circle cx="765.3" cy="615.3" r="4.5" fill="none" stroke="#d00000" stroke-width="1.5"/>
<circle cx="619.4" cy="610.3" r="4.5" fill="none" stroke="#d00000" stroke-width="1.5"/>
<circle cx="622.9" cy="622.3" r="4.5" fill="none" stroke="#d00000" stroke-width="1.5"/>
<circle cx="632.7" cy="620.3" r="4.5" fill="none" stroke="#d00000" stroke-width="1.5"/>
<circle cx="653.7" cy="622.3" r="4.5" fill="none" stroke="#d00000" stroke-width="1.5"/>
<circle cx="674.2" cy="626.0" r="4.5" fill="none" stroke="#d00000" stroke-width="1.5"/>
<circle cx="698.8" cy="620.1" r="4.5" fill="none" stroke="#d00000" stroke-width="1.5"/>
<circle cx="726.1" cy="619.0" r="4.5" fill="none" stroke="#d00000" stroke-width="1.5"/>
<circle cx="740.4" cy="623.6" r="4.5" fill="none" stroke="#d00000" stroke-width="1.5"/>
<circle cx="746.4" cy="618.8" r="4.5" fill="none" stroke="#d00000" stroke-width="1.5"/>
<circle cx="662.2" cy="634.5" r="4.5" fill="none" stroke="#d00000" stroke-width="1.5"/>
<circle cx="661.1" cy="642.6" r="4.5" fill="none" stroke="#d00000" stroke-width="1.5"/>
<circle cx="697.7" cy="639.0" r="4.5" fill="none" stroke="#d00000" stroke-width="1.5"/>
<circle cx="714.3" cy="643.9" r="4.5" fill="none" stroke="#d00000" stroke-width="1.5"/>
<circle cx="723.7" cy="636.6" r="4.5" fill="none" stroke="#d00000" stroke-width="1.5"/>
<circle cx="733.3" cy="639.0" r="4.5" fill="none" stroke="#d00000" stroke-width="1.5"/>
<circle cx="683.5" cy="649.7" r="4.5" fill="none" stroke="#d00000" stroke-width="1.5"/>
<circle cx="680.9" cy="660.4" r="4.5" fill="none" stroke="#d00000" stroke-width="1.5"/>
<circle cx="624.0" cy="655.6" r="4.5" fill="none" stroke="#d00000" stroke-width="1.5"/>
<circle cx="623.1" cy="666.3" r="4.5" fill="none" stroke="#d00000" stroke-width="1.5"/>
<circle cx="642.1" cy="661.5" r="4.5" fill="none" stroke="#d00000" stroke-width="1.5"/>
<circle cx="723.9" cy="663.7" r="4.5" fill="none" stroke="#d00000" stroke-width="1.5"/>
<circle cx="761.8" cy="660.2" r="4.5" fill="none" stroke="#d00000" stroke-width="1.5"/>
<circle cx="771.4" cy="653.2" r="4.5" fill="none" stroke="#d00000" stroke-width="1.5"/>
<circle cx="781.9" cy="661.5" r="4.5" fill="none" stroke="#d00000" stroke-width="1.5"/>
<circle cx="746.4" cy="672.2" r="4.5" fill="none" stroke="#d00000" stroke-width="1.5"/>
<circle cx="694.0" cy="677.7" r="4.5" fill="none" stroke="#d00000" stroke-width="1.5"/>
<circle cx="697.7" cy="684.0" r="4.5" fill="none" stroke="#d00000" stroke-width="1.5"/>
<circle cx="734.6" cy="684.0" r="4.5" fill="none" stroke="#d00000" stroke-width="1.5"/>
<circle cx="658.9" cy="688.6" r="4.5" fill="none" stroke="#d00000" stroke-width="1.5"/>
<circle cx="654.8" cy="692.5" r="4.5" fill="none" stroke="#d00000" stroke-width="1.5"/>
<circle cx="676.5" cy="692.5" r="4.5" fill="none" stroke="#d00000" stroke-width="1.5"/>
<circle cx="691.8" cy="705.4" r="4.5" fill="none" stroke="#d00000" stroke-width="1.5"/>
<circle cx="723.5" cy="697.1" r="4.5" fill="none" stroke="#d00000" stroke-width="1.5"/>
<circle cx="729.8" cy="697.1" r="4.5" fill="none" stroke="#d00000" stroke-width="1.5"/>
</svg>
<!--TEXT-->
<div class="t" style="left:461.70px;top:157px;font-size:26px;color:#111;transform:scaleX(1.0898)">Particle Detection GUI</div>
<div class="t" style="left:641.50px;top:220px;font-size:15.5px;color:#2c2c2c;transform:scaleX(1.1206)">Image No 6/10</div>
<div class="t" style="left:995.60px;top:203px;font-size:15.5px;color:#2c2c2c;transform:scaleX(1.0955)">Save Settings and Quit</div>
<div class="t" style="left:56.70px;top:262px;font-size:15.5px;color:#2c2c2c;transform:scaleX(1.0898)">Process Image</div>
<div class="t" style="left:4.40px;top:301px;font-size:15.5px;color:#2c2c2c;transform:scaleX(1.0905)">Options</div>
<div class="t" style="left:16.00px;top:339px;font-size:15.5px;color:#2c2c2c;transform:scaleX(1.1108)">length of noise</div>
<div class="t" style="left:16.00px;top:407px;font-size:15.5px;color:#2c2c2c;transform:scaleX(1.0982)">length of Object</div>
<div class="t" style="left:16.00px;top:479px;font-size:15.5px;color:#2c2c2c;transform:scaleX(1.1210)">threshold level</div>
<div class="t" style="left:3.50px;top:580px;font-size:15.5px;color:#2c2c2c;transform:scaleX(1.0997)">Sobel/Blur</div>
<div class="t" style="left:34.00px;top:622px;font-size:15.5px;color:#2c2c2c;transform:scaleX(1.1040)">use sobel filtering</div>
<div class="t" style="left:24.40px;top:656px;font-size:15.5px;color:#2c2c2c;transform:scaleX(1.1108)">length of noise</div>
<div class="t" style="left:24.40px;top:725px;font-size:15.5px;color:#2c2c2c;transform:scaleX(1.1017)">length of Gaussian</div>
<div class="t" style="left:24.40px;top:795px;font-size:15.5px;color:#2c2c2c;transform:scaleX(1.1106)">gain</div>
<div class="t" style="left:4.00px;top:879px;font-size:15.5px;color:#2c2c2c;transform:scaleX(0.9877)">ROI</div>
<div class="t" style="left:76.60px;top:914px;font-size:15.5px;color:#2c2c2c;transform:scaleX(1.0561)">Select ROI</div>
<div class="t" style="left:74.60px;top:951px;font-size:15.5px;color:#2c2c2c;transform:scaleX(1.1282)">stop input by</div>
<div class="t" style="left:70.60px;top:971px;font-size:15.5px;color:#2c2c2c;transform:scaleX(1.1592)">hitting &#39;return&#39;</div>
<!--DIGITS-->
<div class="t" style="left:83.0px;top:371px;width:60px;text-align:center;font-size:16.0px;color:#111">1</div>
<div class="t" style="left:82.5px;top:442px;width:60px;text-align:center;font-size:16.0px;color:#111">3</div>
<div class="t" style="left:83.0px;top:513px;width:60px;text-align:center;font-size:16.0px;color:#111">20</div>
<div class="t" style="left:89.0px;top:691px;width:60px;text-align:center;font-size:16.0px;color:#8c8c8c">1</div>
<div class="t" style="left:89.0px;top:762px;width:60px;text-align:center;font-size:16.0px;color:#8c8c8c">5</div>
<div class="t" style="left:89.0px;top:833px;width:60px;text-align:center;font-size:16.0px;color:#8c8c8c">1</div>
<!--/TEXT-->
</body></html>
